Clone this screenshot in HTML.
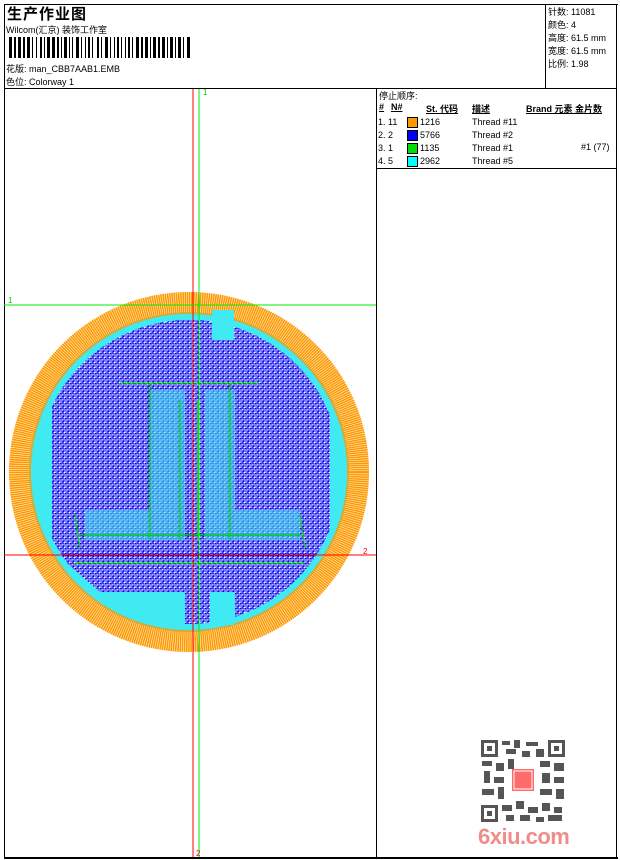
<!DOCTYPE html>
<html><head><meta charset="utf-8"><style>
*{margin:0;padding:0}
body{width:620px;height:860px;background:#fff;position:relative;overflow:hidden;font-family:"Liberation Sans","Noto Sans CJK SC",sans-serif;font-size:9px;color:#000}
.a{position:absolute;white-space:nowrap}
.l{position:absolute;background:#000}
</style></head><body>
<div class="l" style="left:4px;top:4px;width:614px;height:1px"></div>
<div class="l" style="left:4px;top:857px;width:614px;height:2px"></div>
<div class="l" style="left:4px;top:4px;width:1px;height:855px"></div>
<div class="l" style="left:616px;top:4px;width:1px;height:855px"></div>
<div class="l" style="left:4px;top:88px;width:613px;height:1px"></div>
<div class="l" style="left:545px;top:4px;width:1px;height:84px"></div>
<div class="l" style="left:376px;top:88px;width:1px;height:770px"></div>
<div class="l" style="left:376px;top:168px;width:241px;height:1px"></div>

<div class="a" style="left:7px;top:3px;font-size:15px;font-weight:bold;letter-spacing:1px">生产作业图</div>
<div class="a" style="left:6px;top:23px">Wilcom(汇京) 装饰工作室</div>
<svg class="a" style="left:9px;top:37px" width="182" height="21">
<g fill="#000">
<rect x="0" y="0" width="3" height="21"/><rect x="5" y="0" width="2" height="21"/><rect x="9" y="0" width="3" height="21"/><rect x="14" y="0" width="2" height="21"/><rect x="18" y="0" width="3" height="21"/><rect x="23" y="0" width="1" height="21"/><rect x="27" y="0" width="1" height="21"/><rect x="31" y="0" width="2" height="21"/><rect x="35" y="0" width="1" height="21"/><rect x="38" y="0" width="3" height="21"/><rect x="43" y="0" width="3" height="21"/><rect x="48" y="0" width="2" height="21"/><rect x="52" y="0" width="1" height="21"/><rect x="55" y="0" width="3" height="21"/><rect x="60" y="0" width="1" height="21"/><rect x="63" y="0" width="1" height="21"/><rect x="67" y="0" width="3" height="21"/><rect x="72" y="0" width="1" height="21"/><rect x="76" y="0" width="1" height="21"/><rect x="79" y="0" width="2" height="21"/><rect x="83" y="0" width="1" height="21"/><rect x="88" y="0" width="2" height="21"/><rect x="92" y="0" width="1" height="21"/><rect x="96" y="0" width="3" height="21"/><rect x="101" y="0" width="1" height="21"/><rect x="105" y="0" width="1" height="21"/><rect x="108" y="0" width="2" height="21"/><rect x="112" y="0" width="1" height="21"/><rect x="116" y="0" width="1" height="21"/><rect x="119" y="0" width="2" height="21"/><rect x="123" y="0" width="1" height="21"/><rect x="127" y="0" width="3" height="21"/><rect x="132" y="0" width="2" height="21"/><rect x="136" y="0" width="3" height="21"/><rect x="141" y="0" width="1" height="21"/><rect x="144" y="0" width="3" height="21"/><rect x="149" y="0" width="2" height="21"/><rect x="153" y="0" width="3" height="21"/><rect x="158" y="0" width="1" height="21"/><rect x="161" y="0" width="3" height="21"/><rect x="166" y="0" width="1" height="21"/><rect x="169" y="0" width="3" height="21"/><rect x="174" y="0" width="1" height="21"/><rect x="178" y="0" width="3" height="21"/>
</g></svg>
<div class="a" style="left:6px;top:62px">花版: man_CBB7AAB1.EMB</div>
<div class="a" style="left:6px;top:75px">色位: Colorway 1</div>

<div class="a" style="left:548px;top:6px;line-height:13px">针数: 11081<br>颜色: 4<br>高度: 61.5 mm<br>宽度: 61.5 mm<br>比例: 1.98</div>

<div class="a" style="left:379px;top:89px">停止顺序:</div>
<div class="a" style="left:379px;top:102px;font-weight:bold;text-decoration:underline">#</div>
<div class="a" style="left:391px;top:102px;font-weight:bold;text-decoration:underline">N#</div>
<div class="a" style="left:426px;top:102px;font-weight:bold;text-decoration:underline">St. 代码</div>
<div class="a" style="left:472px;top:102px;font-weight:bold;text-decoration:underline">描述</div>
<div class="a" style="left:526px;top:102px;font-weight:bold;text-decoration:underline">Brand 元素 金片数</div>
<div class="a" style="left:378px;top:116px;line-height:13px">1. 11<br>2. 2<br>3. 1<br>4. 5</div>
<div class="a" style="left:407px;top:117px;width:9px;height:9px;background:#ff9900;border:1px solid #000"></div>
<div class="a" style="left:407px;top:130px;width:9px;height:9px;background:#0000ff;border:1px solid #000"></div>
<div class="a" style="left:407px;top:143px;width:9px;height:9px;background:#00e000;border:1px solid #000"></div>
<div class="a" style="left:407px;top:156px;width:9px;height:9px;background:#00ffff;border:1px solid #000"></div>
<div class="a" style="left:420px;top:116px;line-height:13px">1216<br>5766<br>1135<br>2962</div>
<div class="a" style="left:472px;top:116px;line-height:13px">Thread #11<br>Thread #2<br>Thread #1<br>Thread #5</div>
<div class="a" style="left:581px;top:142px">#1 (77)</div>

<svg class="a" style="left:0;top:0" width="376" height="860">
<defs>
<pattern id="bp" width="5" height="5" patternUnits="userSpaceOnUse">
<rect width="5" height="5" fill="#fff"/>
<path d="M0 1h3v3h2M1 5v-2h2M4 0v2M0 3.5h1" stroke="#0000ee" stroke-width="1.1" fill="none"/>
</pattern>
<clipPath id="cc"><circle cx="189" cy="472" r="152"/></clipPath>
</defs>
<circle cx="189" cy="472" r="160" fill="#40eaf2"/>
<circle cx="189" cy="472" r="169" fill="none" stroke="#ff9900" stroke-width="22" stroke-dasharray="1.6 0.5"/>
<g clip-path="url(#cc)">
<path d="M52 347 L95 345 L95 318 L330 318 L330 345 L330 550 L300 592 L100 592 L52 550 Z" fill="url(#bp)"/>
<rect x="185" y="300" width="25" height="345" fill="url(#bp)"/>
<rect x="235" y="590" width="45" height="50" fill="url(#bp)"/>
<rect x="240" y="300" width="40" height="45" fill="url(#bp)"/>
</g>
<rect x="212" y="310" width="22" height="30" fill="#40eaf2"/>
<rect x="212" y="592" width="22" height="33" fill="#40eaf2"/>
<g fill="#44e0ee" opacity=".6">
<rect x="150" y="390" width="35" height="150"/>
<rect x="205" y="390" width="30" height="150"/>
<rect x="85" y="510" width="100" height="30"/>
<rect x="205" y="510" width="95" height="30"/>
</g>
<g stroke="#00dd00" stroke-width="1.2">
<line x1="120" y1="383" x2="258" y2="383"/>
<line x1="75" y1="563" x2="305" y2="563"/>
<line x1="150" y1="383" x2="150" y2="540"/>
<line x1="230" y1="383" x2="230" y2="540"/>
<line x1="180" y1="400" x2="180" y2="540"/>
<line x1="198" y1="400" x2="198" y2="540"/>
<line x1="75" y1="515" x2="80" y2="548"/>
<line x1="300" y1="515" x2="305" y2="548"/>
<line x1="80" y1="535" x2="300" y2="535"/>
</g>
<line x1="193" y1="89" x2="193" y2="857" stroke="#ff0000" stroke-width="1"/>
<line x1="199" y1="89" x2="199" y2="857" stroke="#00ee00" stroke-width="1"/>
<line x1="4" y1="305" x2="376" y2="305" stroke="#00ee00" stroke-width="1"/>
<line x1="4" y1="555" x2="376" y2="555" stroke="#ff0000" stroke-width="1"/>
<text x="203" y="95" fill="#00cc00" font-size="8" font-family="Liberation Sans">1</text>
<text x="8" y="303" fill="#00cc00" font-size="8" font-family="Liberation Sans">1</text>
<text x="363" y="554" fill="#ff0000" font-size="8" font-family="Liberation Sans">2</text>
<text x="196" y="856" fill="#ff0000" font-size="8" font-family="Liberation Sans">2</text>
</svg>

<svg class="a" style="left:480px;top:739px" width="86" height="84">
<rect width="86" height="84" fill="#fff"/>
<g fill="#555">
<rect x="1" y="1" width="17" height="17"/><rect x="68" y="1" width="17" height="17"/><rect x="1" y="66" width="17" height="17"/>
</g>
<g fill="#fff"><rect x="4" y="4" width="11" height="11"/><rect x="71" y="4" width="11" height="11"/><rect x="4" y="69" width="11" height="11"/></g>
<g fill="#555"><rect x="7" y="7" width="5" height="5"/><rect x="74" y="7" width="5" height="5"/><rect x="7" y="72" width="5" height="5"/></g>
<g fill="#555">
<rect x="22" y="2" width="8" height="4"/><rect x="34" y="1" width="6" height="8"/><rect x="46" y="3" width="12" height="4"/><rect x="26" y="10" width="10" height="5"/><rect x="42" y="12" width="8" height="6"/><rect x="56" y="10" width="8" height="8"/>
<rect x="2" y="22" width="10" height="5"/><rect x="16" y="24" width="8" height="8"/><rect x="28" y="20" width="6" height="10"/><rect x="60" y="22" width="10" height="6"/><rect x="74" y="24" width="10" height="8"/>
<rect x="4" y="32" width="6" height="12"/><rect x="14" y="38" width="10" height="6"/><rect x="62" y="34" width="8" height="10"/><rect x="74" y="38" width="10" height="6"/>
<rect x="2" y="50" width="12" height="6"/><rect x="18" y="48" width="6" height="12"/><rect x="60" y="50" width="12" height="6"/><rect x="76" y="50" width="8" height="10"/>
<rect x="22" y="66" width="10" height="6"/><rect x="36" y="62" width="8" height="8"/><rect x="48" y="68" width="10" height="6"/><rect x="62" y="64" width="8" height="8"/><rect x="74" y="68" width="8" height="6"/>
<rect x="26" y="76" width="8" height="6"/><rect x="40" y="76" width="10" height="6"/><rect x="56" y="78" width="8" height="5"/><rect x="68" y="76" width="14" height="6"/>
</g>
<rect x="32" y="30" width="22" height="22" fill="#ff6b6b"/>
<rect x="34" y="32" width="18" height="18" fill="none" stroke="#fff" stroke-width="1"/>
</svg>
<div class="a" style="left:478px;top:824px;font-size:22px;font-weight:bold;color:#f08c8c;letter-spacing:-0.5px">6xiu.com</div>
</body></html>
